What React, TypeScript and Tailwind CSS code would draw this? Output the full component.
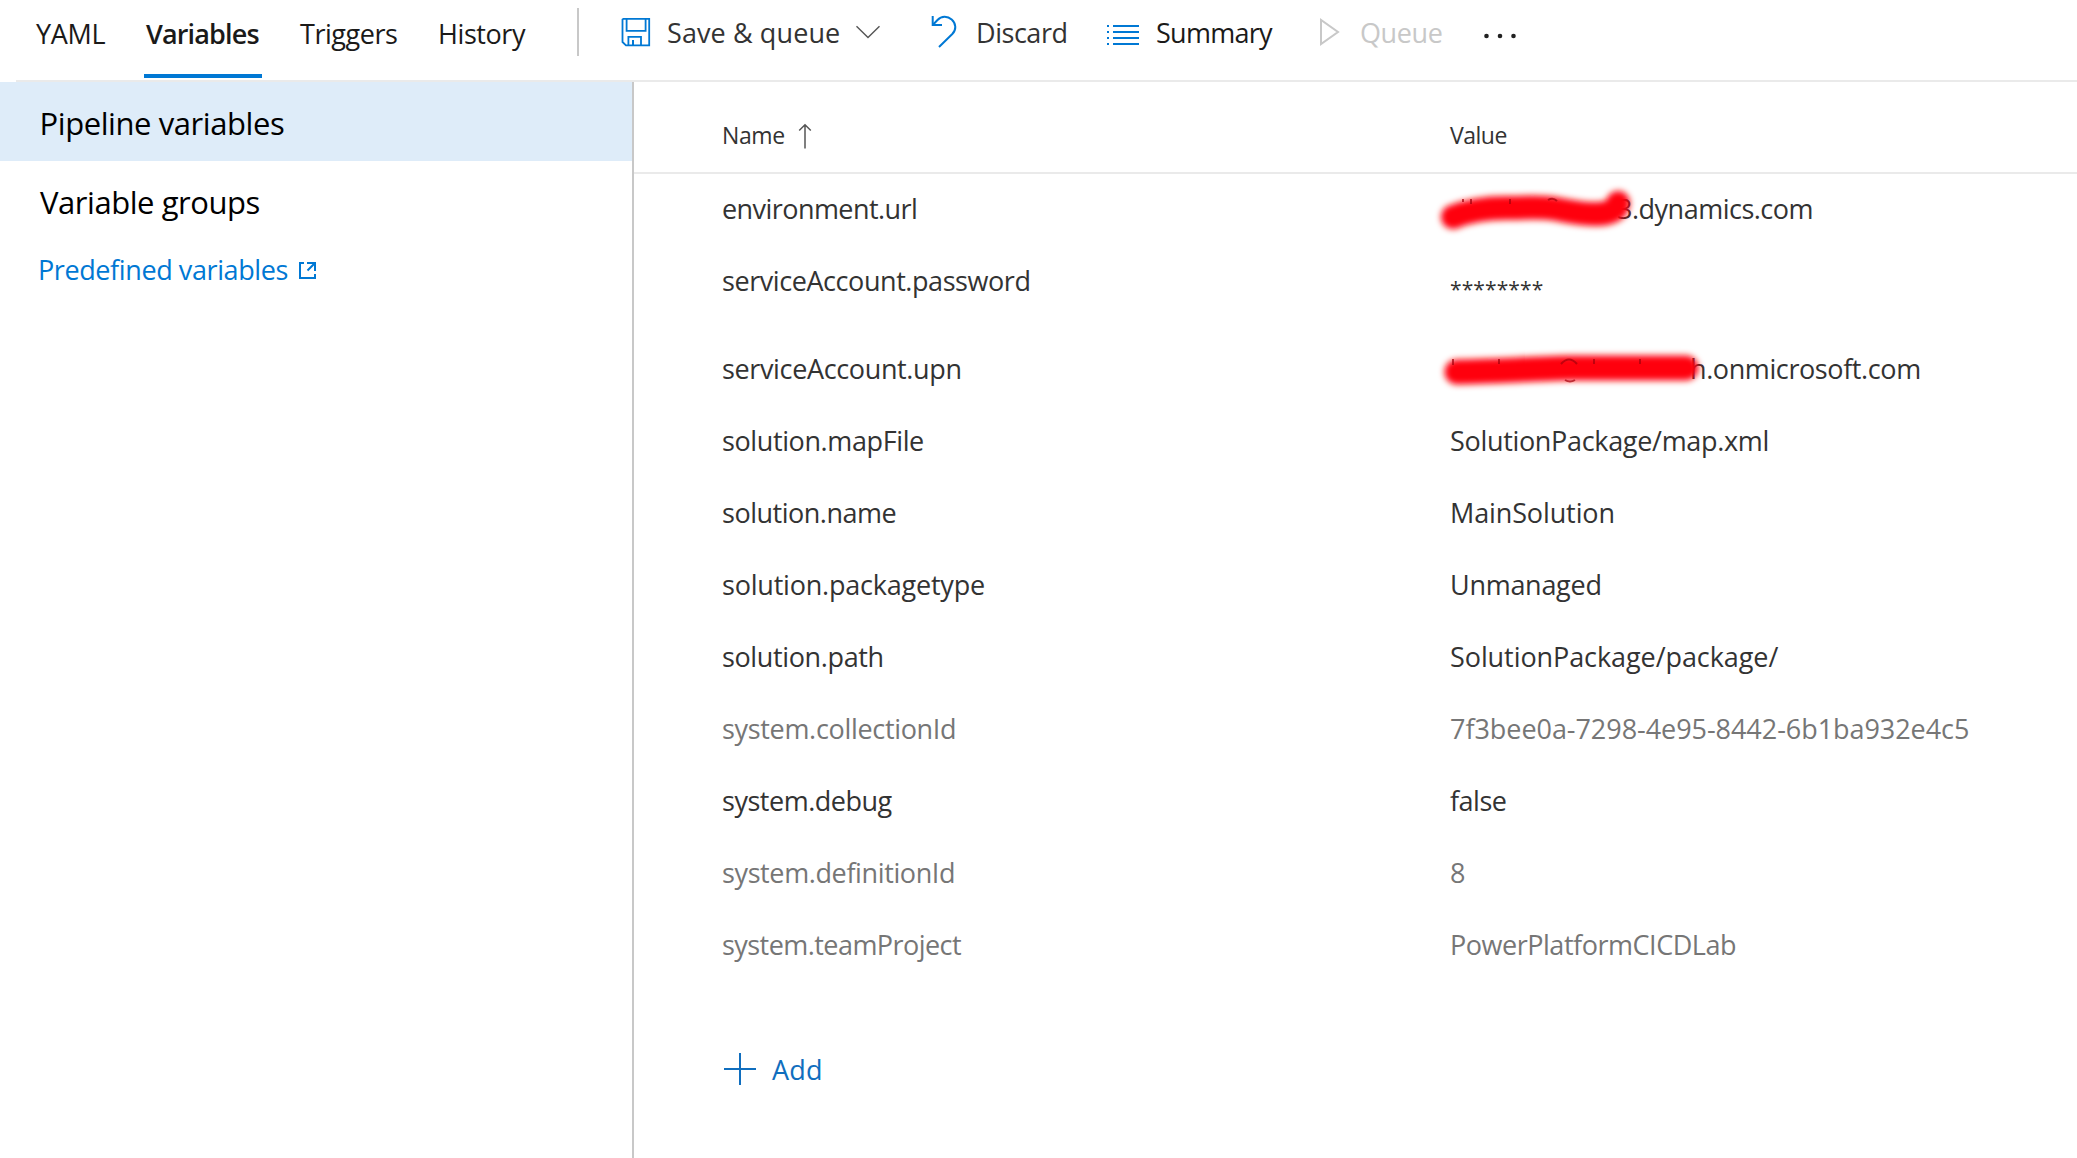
import React from "react";

type Variable = {
  name: string;
  value: string;
  nameTracking: string;
  valueTracking: string;
  muted?: boolean;
  secret?: boolean;
  redaction?: "url" | "upn";
};

const variables: Variable[] = [
  { name: "environment.url", nameTracking: "tracking-[-0.56px]", value: "3.dynamics.com", valueTracking: "tracking-[-0.5px]", redaction: "url" },
  { name: "serviceAccount.password", nameTracking: "tracking-[-0.43px]", value: "********", valueTracking: "tracking-[0.1px]", secret: true },
  { name: "serviceAccount.upn", nameTracking: "tracking-[-0.36px]", value: "h.onmicrosoft.com", valueTracking: "tracking-[-0.4px]", redaction: "upn" },
  { name: "solution.mapFile", nameTracking: "tracking-[-0.39px]", value: "SolutionPackage/map.xml", valueTracking: "tracking-[-0.32px]" },
  { name: "solution.name", nameTracking: "tracking-[-0.49px]", value: "MainSolution", valueTracking: "tracking-[-0.12px]" },
  { name: "solution.packagetype", nameTracking: "tracking-[-0.21px]", value: "Unmanaged", valueTracking: "tracking-[-0.28px]" },
  { name: "solution.path", nameTracking: "tracking-[-0.37px]", value: "SolutionPackage/package/", valueTracking: "tracking-[-0.08px]" },
  { name: "system.collectionId", nameTracking: "tracking-[-0.32px]", value: "7f3bee0a-7298-4e95-8442-6b1ba932e4c5", valueTracking: "tracking-[-0.05px]", muted: true },
  { name: "system.debug", nameTracking: "tracking-[-0.48px]", value: "false", valueTracking: "tracking-[-0.5px]" },
  { name: "system.definitionId", nameTracking: "tracking-[-0.38px]", value: "8", valueTracking: "tracking-normal", muted: true },
  { name: "system.teamProject", nameTracking: "tracking-[-0.55px]", value: "PowerPlatformCICDLab", valueTracking: "tracking-[-0.47px]", muted: true },
];

function SaveIcon() {
  return (
    <svg className="mt-[17px] ml-[42px] shrink-0" width="30" height="30" fill="none" stroke="#0078d4" strokeWidth="1.8">
      <path d="M1.5 2.5 L2.5 1.8 H28.2 V28.4 H5 L1.5 25 Z" />
      <path d="M5.6 1.8 V13.8 H24.6 V1.8" />
      <path d="M7.4 28.4 V19.8 H20 V28.4" />
      <path d="M11.6 28.4 V23.6 H12.4 V28.4" strokeWidth="1.2" />
    </svg>
  );
}

function ChevronIcon() {
  return (
    <svg className="mt-[24px] ml-[15px] shrink-0" width="26" height="16" fill="none" stroke="#555" strokeWidth="1.4">
      <path d="M1.5 2.2 L13 13.4 L24.5 2.2" />
    </svg>
  );
}

function UndoIcon() {
  return (
    <svg className="mt-[14px] ml-[48px] shrink-0" width="28" height="36" fill="none" stroke="#0078d4" strokeWidth="2">
      <path d="M2.7 2 V11 H12" />
      <path d="M2.7 11 L7.5 6 C11.5 1.8 17.5 1.8 21.7 5.6 C26.3 9.8 26.5 15.6 22.3 20 L9 33" />
    </svg>
  );
}

function ListIcon() {
  return (
    <svg className="mt-[23px] ml-[39px] shrink-0" width="34" height="24" fill="#0078d4">
      {[2, 8, 14, 20].map((y) => (
        <g key={y}>
          <rect x="1" y={y} width="2" height="2" />
          <rect x="7" y={y} width="26" height="2" />
        </g>
      ))}
    </svg>
  );
}

function PlayIcon() {
  return (
    <svg className="mt-[17px] ml-[46px] shrink-0" width="22" height="30" fill="none" stroke="#c8c8c8" strokeWidth="2">
      <path d="M2 3 V27 L19 15 Z" />
    </svg>
  );
}

function UrlScribble() {
  return (
    <svg className="absolute -top-[14px] -left-[30px]" width="240" height="100" viewBox="0 -14 240 100" fill="none">
      <defs>
        <filter id="soft-url" filterUnits="userSpaceOnUse" x="0" y="-14" width="240" height="100">
          <feGaussianBlur stdDeviation="3.2" />
        </filter>
      </defs>
      <path
        d="M33 43 C48 37 64 34 86 34 C106 34 118 32 136 35 C152 38 162 40.5 178 40 C190 39.5 197 36 198 29"
        stroke="#ff0010" strokeWidth="24" strokeLinecap="round" strokeLinejoin="round" filter="url(#soft-url)"
      />
      <path d="M43 25 v3 M51 25 v5 M90 25 v5 M128 26 q5 -3 9 1" stroke="#a5000c" strokeWidth="2" opacity="0.7" />
    </svg>
  );
}

function UpnScribble() {
  return (
    <svg className="absolute -top-[14px] -left-[30px]" width="310" height="100" viewBox="0 -14 310 100" fill="none">
      <defs>
        <filter id="soft-upn" filterUnits="userSpaceOnUse" x="0" y="-14" width="310" height="100">
          <feGaussianBlur stdDeviation="3.2" />
        </filter>
      </defs>
      <path
        d="M37 38 C80 37 110 35 150 34 L266 34"
        stroke="#ff0010" strokeWidth="25" strokeLinecap="round" strokeLinejoin="round" filter="url(#soft-upn)"
      />
      <path d="M33 25 v6 M79 25 v5 M141 30 q8 -9 16 0 M145 46 q5 3 10 0 M174 25 v5 M220 25 v5" stroke="#a5000c" strokeWidth="2" opacity="0.7" />
    </svg>
  );
}

function Row({ v }: { v: Variable }) {
  return (
    <div className={`flex text-[27px] leading-[69px] ${v.secret ? "h-[88px]" : "h-[72px]"} ${v.muted ? "text-[#767676]" : "text-[#333333]"}`}>
      <div className={`w-[728px] ${v.nameTracking}`}>{v.name}</div>
      <div className={`relative ${v.valueTracking} ${v.secret ? "text-[21px] leading-[86px]" : ""} ${v.redaction === "url" ? "pl-[167px]" : ""} ${v.redaction === "upn" ? "pl-[240px]" : ""}`}>
        {v.value}
        {v.redaction === "url" && <UrlScribble />}
        {v.redaction === "upn" && <UpnScribble />}
      </div>
    </div>
  );
}

export default function App() {
  return (
    <div className="flex h-[1158px] w-[2077px] flex-col overflow-hidden bg-white font-['Open_Sans','Noto_Sans',sans-serif] whitespace-nowrap">
      <header className="ml-[16px] flex h-[82px] shrink-0 border-b-2 border-[#eaeaea] text-[27px] leading-[65px] text-[#333333]">
        <nav className="flex h-[78px] leading-[67px] text-[#1b1a19]">
          <a className="w-[128px] pl-[20px] tracking-[-0.3px]">YAML</a>
          <a className="w-[118px] border-b-4 border-[#0078d4] pl-[2px] font-semibold tracking-[-0.85px]">Variables</a>
          <a className="w-[176px] pl-[38px] tracking-[-0.46px]">Triggers</a>
          <a className="w-[139px] tracking-[-0.42px]">History</a>
        </nav>
        <div className="mt-[8px] h-[48px] w-[2px] bg-[#c8c8c8]" />
        <div className="flex w-[303px]">
          <SaveIcon />
          <span className="ml-[16px] tracking-[0.1px]">Save &amp; queue</span>
          <ChevronIcon />
        </div>
        <div className="flex w-[185px]">
          <UndoIcon />
          <span className="ml-[18px] tracking-[-0.46px]">Discard</span>
        </div>
        <div className="flex w-[206px] text-[#1b1a19]">
          <ListIcon />
          <span className="ml-[16px] tracking-[-0.73px]">Summary</span>
        </div>
        <div className="flex w-[211px] text-[#c8c8c8]">
          <PlayIcon />
          <span className="ml-[19px] tracking-[-0.4px]">Queue</span>
        </div>
        <svg className="mt-[32px]" width="34" height="8" fill="#212121">
          <circle cx="2.5" cy="4" r="2.3" />
          <circle cx="16" cy="4" r="2.3" />
          <circle cx="29.5" cy="4" r="2.3" />
        </svg>
      </header>

      <div className="flex min-h-0 flex-1">
        <aside className="w-[634px] shrink-0 border-r-2 border-[#c8c8c8] text-[31px] leading-[83px] text-black">
          <div className="h-[79px] bg-[#deecf9] pl-[39.5px] tracking-[-0.42px]">Pipeline variables</div>
          <div className="h-[79px] pl-[40px] tracking-[-0.45px]">Variable groups</div>
          <a className="flex pl-[38px] text-[27px] leading-[60px] tracking-[-0.4px] text-[#0078d4]">
            Predefined variables
            <svg className="mt-[21px] ml-[10px]" width="20" height="20" fill="none" stroke="#0078d4" strokeWidth="2">
              <path d="M6 2 H2 V17 H17 V13" />
              <path d="M9 2 H17 V10 M17 2 L9.5 9.5" />
            </svg>
          </a>
        </aside>

        <main className="flex-1">
          <div className="flex h-[92px] border-b-2 border-[#eaeaea] pt-[23px] pl-[88px] text-[23px] leading-[60px] text-[#333333]">
            <div className="flex w-[728px] tracking-[-0.4px]">
              Name
              <svg className="mt-[18px] ml-[12.5px]" width="16" height="28" fill="none" stroke="#555" strokeWidth="1.5">
                <path d="M8 1.5 V25.5 M2.2 7.5 L8 1.8 L13.8 7.5" />
              </svg>
            </div>
            <div className="tracking-[-0.5px]">Value</div>
          </div>
          <div className="pl-[88px]">
            {variables.map((v) => (
              <Row key={v.name} v={v} />
            ))}
            <button className="mt-[60px] flex text-[27px] leading-[55px] tracking-[0.2px] text-[#106ebe]">
              <svg className="mt-[11px] mr-[15px] ml-[2px]" width="33" height="33" stroke="#106ebe" strokeWidth="2">
                <path d="M0 16 H32 M16 0 V32" />
              </svg>
              Add
            </button>
          </div>
        </main>
      </div>
    </div>
  );
}
